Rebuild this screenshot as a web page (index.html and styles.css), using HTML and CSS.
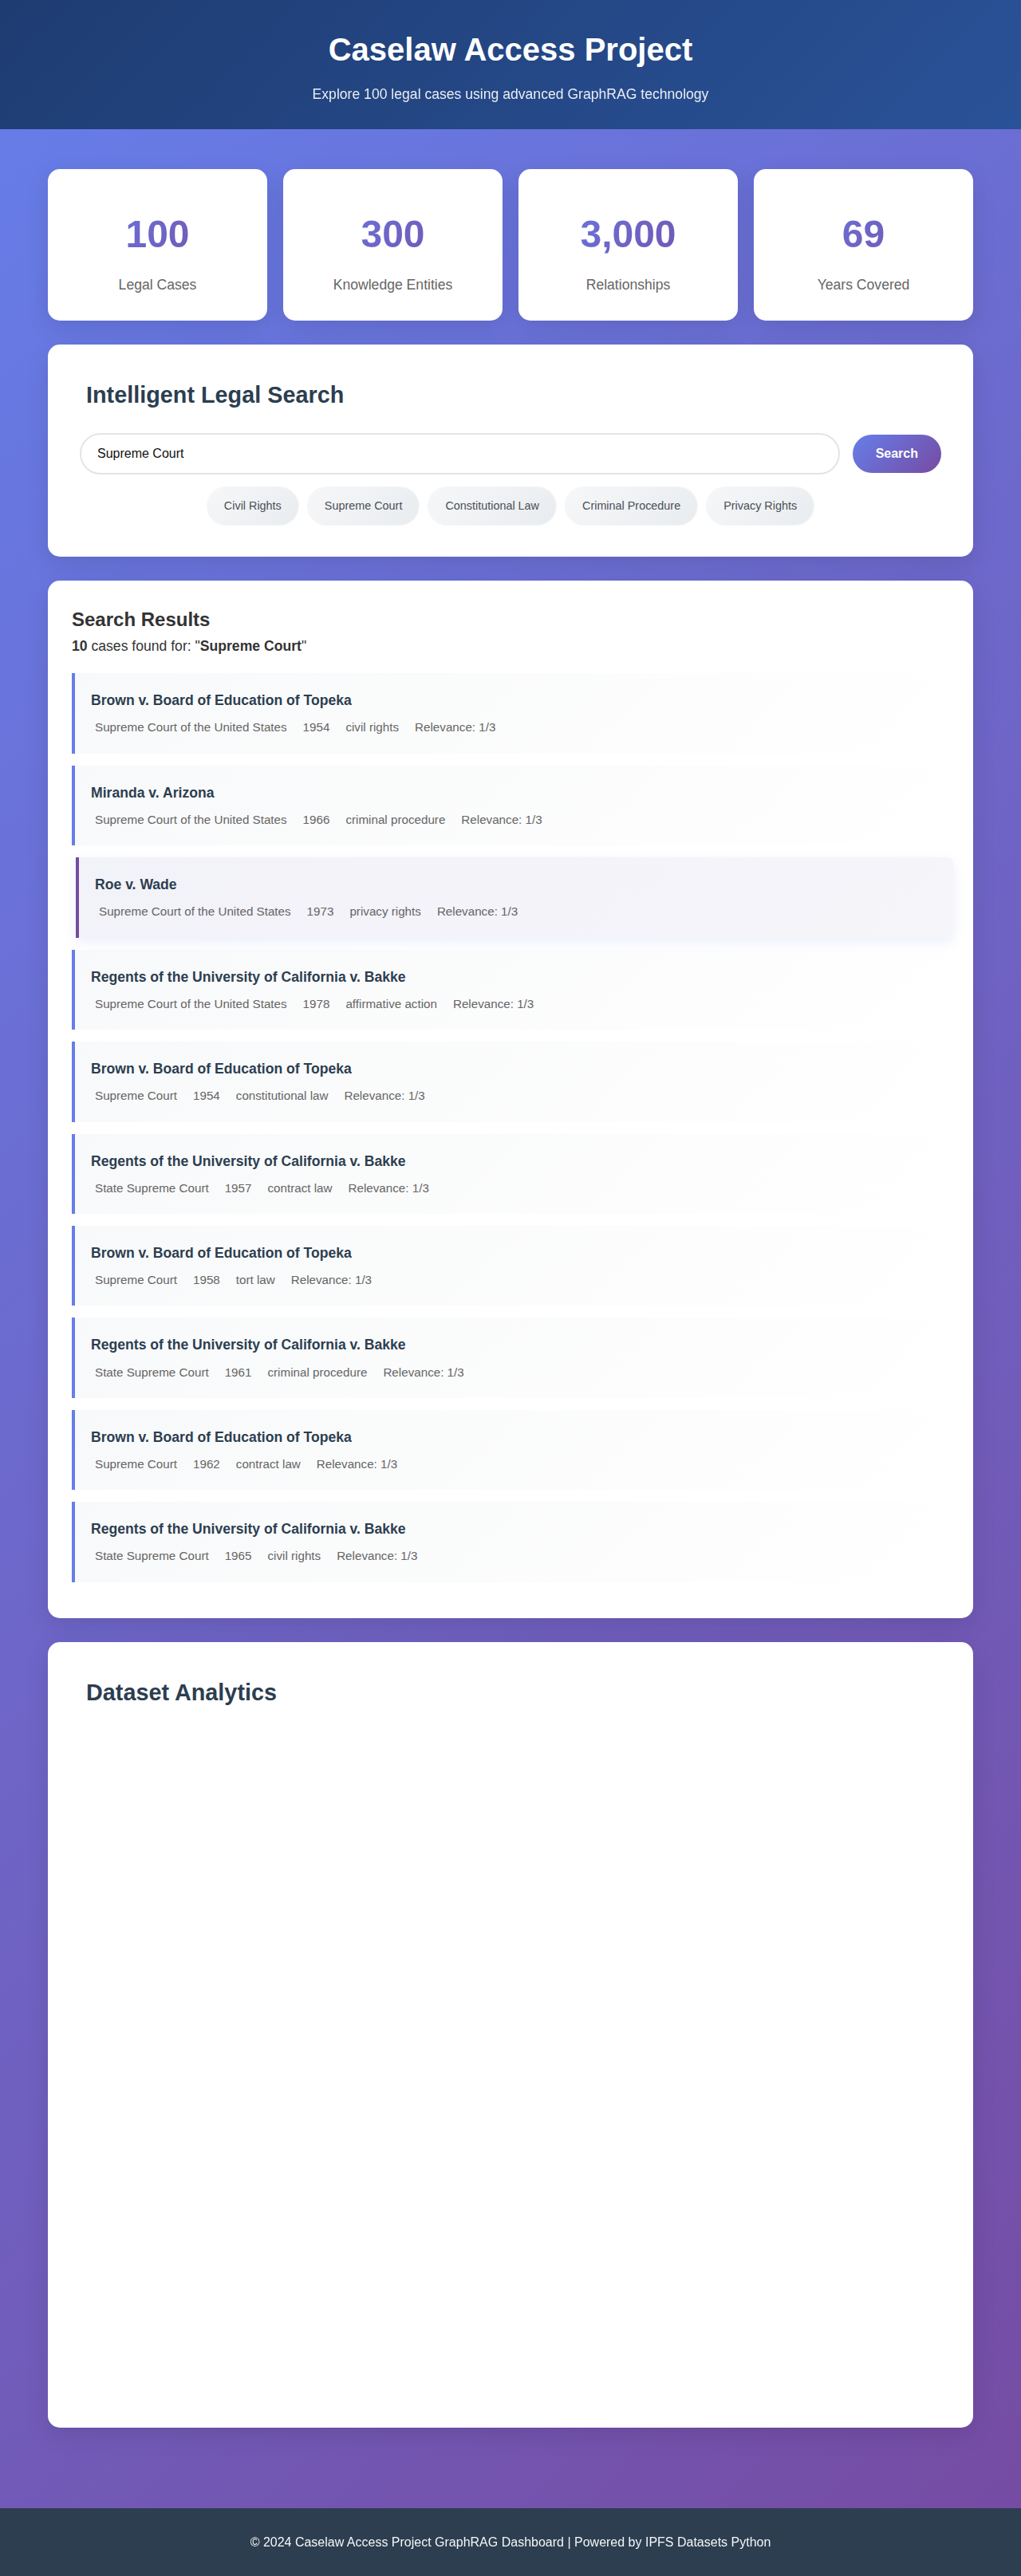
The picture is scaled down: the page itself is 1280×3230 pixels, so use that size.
FILE: index.html
```html
<!DOCTYPE html>
<html lang="en">
<head>
<meta charset="utf-8">
<title>Caselaw Access Project</title>
<link rel="stylesheet" href="styles.css">
</head>
<body>
<header class="site-header">
  <h1 class="site-title">Caselaw Access Project</h1>
  <p class="site-subtitle">Explore 100 legal cases using advanced GraphRAG technology</p>
</header>

<main class="container">
  <section class="stats">
    <div class="stat-card"><div class="stat-number">100</div><div class="stat-label">Legal Cases</div></div>
    <div class="stat-card"><div class="stat-number">300</div><div class="stat-label">Knowledge Entities</div></div>
    <div class="stat-card"><div class="stat-number">3,000</div><div class="stat-label">Relationships</div></div>
    <div class="stat-card"><div class="stat-number">69</div><div class="stat-label">Years Covered</div></div>
  </section>

  <section class="card search-card">
    <h2 class="card-title">Intelligent Legal Search</h2>
    <div class="search-row">
      <input class="search-input" type="text" value="Supreme Court">
      <button class="search-btn">Search</button>
    </div>
    <div class="chips">
      <span class="chip">Civil Rights</span>
      <span class="chip">Supreme Court</span>
      <span class="chip">Constitutional Law</span>
      <span class="chip">Criminal Procedure</span>
      <span class="chip">Privacy Rights</span>
    </div>
  </section>

  <section class="card results-card">
    <h3 class="results-title">Search Results</h3>
    <p class="results-count"><strong>10</strong> cases found for: "<strong>Supreme Court</strong>"</p>
    <div class="results">
      <div class="result"><div class="result-title">Brown v. Board of Education of Topeka</div><div class="result-meta"><span>Supreme Court of the United States</span><span>1954</span><span>civil rights</span><span>Relevance: 1/3</span></div></div>
      <div class="result"><div class="result-title">Miranda v. Arizona</div><div class="result-meta"><span>Supreme Court of the United States</span><span>1966</span><span>criminal procedure</span><span>Relevance: 1/3</span></div></div>
      <div class="result result-active"><div class="result-title">Roe v. Wade</div><div class="result-meta"><span>Supreme Court of the United States</span><span>1973</span><span>privacy rights</span><span>Relevance: 1/3</span></div></div>
      <div class="result"><div class="result-title">Regents of the University of California v. Bakke</div><div class="result-meta"><span>Supreme Court of the United States</span><span>1978</span><span>affirmative action</span><span>Relevance: 1/3</span></div></div>
      <div class="result"><div class="result-title">Brown v. Board of Education of Topeka</div><div class="result-meta"><span>Supreme Court</span><span>1954</span><span>constitutional law</span><span>Relevance: 1/3</span></div></div>
      <div class="result"><div class="result-title">Regents of the University of California v. Bakke</div><div class="result-meta"><span>State Supreme Court</span><span>1957</span><span>contract law</span><span>Relevance: 1/3</span></div></div>
      <div class="result"><div class="result-title">Brown v. Board of Education of Topeka</div><div class="result-meta"><span>Supreme Court</span><span>1958</span><span>tort law</span><span>Relevance: 1/3</span></div></div>
      <div class="result"><div class="result-title">Regents of the University of California v. Bakke</div><div class="result-meta"><span>State Supreme Court</span><span>1961</span><span>criminal procedure</span><span>Relevance: 1/3</span></div></div>
      <div class="result"><div class="result-title">Brown v. Board of Education of Topeka</div><div class="result-meta"><span>Supreme Court</span><span>1962</span><span>contract law</span><span>Relevance: 1/3</span></div></div>
      <div class="result"><div class="result-title">Regents of the University of California v. Bakke</div><div class="result-meta"><span>State Supreme Court</span><span>1965</span><span>civil rights</span><span>Relevance: 1/3</span></div></div>
    </div>
  </section>

  <section class="card analytics-card">
    <h2 class="card-title">Dataset Analytics</h2>
    <div class="charts">
      <div class="chart"></div>
      <div class="chart"></div>
      <div class="chart"></div>
      <div class="chart"></div>
    </div>
  </section>
</main>

<footer class="site-footer">
  <p>© 2024 Caselaw Access Project GraphRAG Dashboard | Powered by IPFS Datasets Python</p>
</footer>
</body>
</html>
```

FILE: styles.css
```css
* {
  box-sizing: border-box;
}

html, body {
  margin: 0;
  padding: 0;
}

body {
  font-family: "Liberation Sans", Arial, sans-serif;
  font-size: 16px;
  line-height: 1.6;
  color: #333;
  background: linear-gradient(135deg, #667eea 0%, #764ba2 100%);
  min-height: 100vh;
}

.site-header {
  background: linear-gradient(135deg, #1e3c72 0%, #2a5298 100%);
  color: #fff;
  text-align: center;
  padding: 38px 20px 30px;
}

.site-title {
  margin: 0 0 18px;
  font-size: 40px;
  line-height: 48px;
  font-weight: 700;
}

.site-subtitle {
  margin: 0;
  font-size: 17.6px;
  line-height: 28px;
  opacity: 0.9;
}

.container {
  max-width: 1200px;
  margin: 0 auto;
  padding: 50px 20px 101px;
  display: flex;
  flex-direction: column;
  gap: 30px;
}

.stats {
  display: grid;
  grid-template-columns: repeat(4, 1fr);
  gap: 20px;
}

.stat-card {
  background: #fff;
  border-radius: 15px;
  padding: 44px 20px 31px;
  text-align: center;
  box-shadow: 0 10px 30px rgba(0, 0, 0, 0.1);
}

.stat-number {
  font-size: 48px;
  line-height: 1.6;
  font-weight: 700;
  margin-bottom: 10px;
  background: linear-gradient(135deg, #667eea 0%, #764ba2 100%);
  -webkit-background-clip: text;
  background-clip: text;
  color: transparent;
}

.stat-label {
  font-size: 17.6px;
  color: #666;
}

.card {
  background: #fff;
  border-radius: 15px;
  box-shadow: 0 10px 30px rgba(0, 0, 0, 0.1);
}

.search-card,
.analytics-card {
  padding: 40px;
}

.card-title {
  margin: 2px 0 26px;
  padding-left: 8px;
  font-size: 28.8px;
  line-height: 1.5;
  font-weight: 700;
  color: #2c3e50;
}

.search-row {
  display: flex;
  align-items: center;
  gap: 16px;
}

.search-input {
  flex: 1;
  font-family: inherit;
  font-size: 16px;
  line-height: 18px;
  padding: 15px 20px;
  border: 2px solid #e1e5e9;
  border-radius: 30px;
  color: #111;
  background: #fff;
  outline: none;
}

.search-btn {
  font-family: inherit;
  font-size: 16px;
  line-height: 18px;
  font-weight: 700;
  color: #fff;
  padding: 15px 29px;
  border: none;
  border-radius: 25px;
  background: linear-gradient(135deg, #667eea 0%, #764ba2 100%);
}

.chips {
  display: flex;
  justify-content: center;
  gap: 12px;
  margin-top: 16px;
}

.chip {
  font-size: 14.4px;
  line-height: 16.6px;
  padding: 15px 21px;
  border-radius: 25px;
  color: #495057;
  background: linear-gradient(135deg, #f6f7f9 0%, #e9ecef 100%);
  box-shadow: 0 0 0 1px rgba(220, 224, 230, 0.35);
}

.results-card {
  padding: 30px;
}

.results-title {
  margin: 0;
  font-size: 24px;
  line-height: 1.6;
  font-weight: 700;
  color: #333;
}

.results-count {
  margin: 0 0 20px;
  font-size: 17.6px;
  color: #333;
}

.results {
  display: flex;
  flex-direction: column;
  gap: 15px;
  margin-bottom: 15px;
}

.result {
  padding: 20px;
  border-left: 4px solid #667eea;
  border-radius: 0 8px 8px 0;
  background: linear-gradient(135deg, #f8f9fa 0%, #ffffff 100%);
}

.result-active {
  border-left-color: #764ba2;
  background: linear-gradient(135deg, #f2f2f9 0%, #f6f5fa 100%);
  transform: translateX(5px);
  box-shadow: 0 5px 15px rgba(102, 126, 234, 0.12);
}

.result-title {
  font-size: 17.6px;
  font-weight: 700;
  color: #2c3e50;
  margin-bottom: 8px;
}

.result-meta {
  display: flex;
  gap: 10px;
  font-size: 15.2px;
  color: #666;
}

.result-meta span {
  padding: 0 5px;
}

.charts {
  display: grid;
  grid-template-columns: 1fr 1fr;
  grid-auto-rows: 402px;
  gap: 30px;
}

.site-footer {
  background: #2c3e50;
  color: #fff;
  text-align: center;
  padding: 30px 20px;
}

.site-footer p {
  margin: 0;
  font-size: 16px;
  line-height: 25.6px;
  opacity: 0.95;
}
```
